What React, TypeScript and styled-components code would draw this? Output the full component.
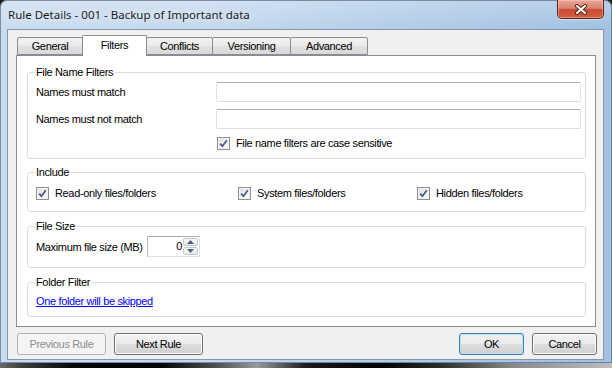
import styled, { createGlobalStyle } from 'styled-components'

const Global = createGlobalStyle`
  html, body {
    margin: 0;
    padding: 0;
  }
  body {
    width: 612px;
    height: 368px;
    overflow: hidden;
    background: #1a1a1a;
    font-family: 'Liberation Sans', Arial, sans-serif;
    font-size: 11px;
    letter-spacing: -0.35px;
    color: #000;
  }
`

const Screen = styled.div`
  width: 612px;
  height: 368px;
  display: flex;
  flex-direction: column;
`

const Frame = styled.div`
  height: 363px;
  box-sizing: border-box;
  display: flex;
  flex-direction: column;
  padding-bottom: 3px;
  border-radius: 7px 7px 0 0;
  background:
    linear-gradient(180deg, rgba(255, 255, 255, 0.25) 0%, rgba(255, 255, 255, 0) 30px),
    linear-gradient(90deg, #c9dcf0 0%, #c4d8ee 35%, #b2cce8 65%, #a1c0e2 100%);
  box-shadow: inset 0 0 0 1px rgba(52, 74, 104, 0.55);
`

const TitleBar = styled.div`
  height: 29px;
  display: flex;
  justify-content: space-between;
  align-items: flex-start;
  padding-left: 8px;
`

const Title = styled.div`
  margin-top: 7px;
  font-family: 'Noto Sans', 'Open Sans', sans-serif;
  font-size: 11.5px;
  letter-spacing: 0;
  line-height: 16px;
  color: #1b1b1b;
  text-shadow: 0 0 6px rgba(255, 255, 255, 0.9);
`

const CloseButton = styled.div`
  width: 47px;
  height: 19px;
  margin-right: 8px;
  box-sizing: border-box;
  display: flex;
  align-items: center;
  justify-content: center;
  border: 1px solid #5b2016;
  border-top: none;
  border-radius: 0 0 5px 5px;
  background: linear-gradient(180deg, #e8a898 0%, #d98470 45%, #c84a32 55%, #d1603f 100%);
  box-shadow: inset 0 0 0 1px rgba(255, 210, 200, 0.45), 0 1px 1px rgba(255, 255, 255, 0.5);
`

const Client = styled.div`
  flex: 1;
  margin: 0 8px 0 7px;
  display: flex;
  flex-direction: column;
  border: 1px solid #8597ab;
  background: #f0f0f0;
`

const TabStrip = styled.div`
  display: flex;
  align-items: flex-end;
  height: 20px;
  padding: 5px 0 0 10px;
  position: relative;
  z-index: 1;
`

const Tab = styled.div<{ $w: number; $active?: boolean }>`
  width: ${(p) => p.$w}px;
  height: ${(p) => (p.$active ? 21 : 18)}px;
  margin-bottom: ${(p) => (p.$active ? -1 : 0)}px;
  margin-left: -1px;
  box-sizing: border-box;
  display: flex;
  align-items: center;
  justify-content: center;
  padding-bottom: ${(p) => (p.$active ? 2 : 0)}px;
  border: 1px solid #898c95;
  border-bottom: ${(p) => (p.$active ? 'none' : '1px solid #898c95')};
  border-radius: 2px 2px 0 0;
  background: ${(p) =>
    p.$active ? '#ffffff' : 'linear-gradient(180deg, #f3f3f3 0%, #ececec 45%, #e1e1e1 55%, #d9d9d9 100%)'};
  position: relative;
  z-index: ${(p) => (p.$active ? 2 : 0)};
`

const Panel = styled.div`
  height: 272px;
  margin: 0 7px 0 8px;
  box-sizing: border-box;
  display: flex;
  flex-direction: column;
  padding: 9px 9px 0 10px;
  border: 1px solid #898c95;
  background: #fff;
`

const Group = styled.fieldset<{ $mt?: number; $pt: number; $pb: number }>`
  margin: ${(p) => p.$mt ?? 0}px 0 0 0;
  min-width: 0;
  padding: ${(p) => p.$pt}px 4px ${(p) => p.$pb}px 8px;
  border: 1px solid #d5dfe5;
  border-radius: 3px;
`

const Legend = styled.legend`
  margin-left: -1px;
  padding: 0 1px;
  line-height: 14px;
  height: 14px;
  color: #000;
`

const NameGrid = styled.div`
  display: grid;
  grid-template-columns: 180px 1fr;
  grid-template-rows: 20px 20px 14px;
  row-gap: 7px;
  align-items: center;
`

const Label = styled.span<{ $w?: number }>`
  ${(p) => (p.$w ? `width: ${p.$w}px;` : '')}
  white-space: nowrap;
`

const TextBox = styled.div`
  height: 20px;
  box-sizing: border-box;
  border: 1px solid #dbdfe6;
  border-top-color: #abadb3;
  border-left-color: #e2e3ea;
  border-right-color: #e2e3ea;
  border-radius: 2px;
  background: #fff;
`

const CheckRow = styled.div<{ $col?: number }>`
  display: flex;
  align-items: center;
  gap: 6px;
  height: 14px;
  ${(p) => (p.$col ? `grid-column: ${p.$col}; padding-left: 1px;` : '')}
`

const Box = styled.div`
  width: 13px;
  height: 13px;
  flex: none;
  box-sizing: border-box;
  border: 1px solid #8e8f8f;
  background: linear-gradient(135deg, #dcdcdc 0%, #f0f0f0 50%, #fbfbfb 100%);
  box-shadow: inset 0 0 0 1px #f4f4f4;
  display: flex;
  align-items: center;
  justify-content: center;
`

const IncludeGrid = styled.div`
  display: grid;
  grid-template-columns: 202px 179px 1fr;
  height: 14px;
`

const SizeRow = styled.div`
  display: flex;
  align-items: center;
  height: 21px;
`

const Spinner = styled.div`
  width: 53px;
  height: 21px;
  box-sizing: border-box;
  display: flex;
  border: 1px solid #dbdfe6;
  border-top-color: #abadb3;
  border-left-color: #b9bdc5;
  background: #fff;
`

const SpinValue = styled.div`
  flex: 1;
  text-align: right;
  line-height: 19px;
  padding-right: 1px;
`

const SpinArrows = styled.div`
  width: 15px;
  display: flex;
  flex-direction: column;
  padding: 1px 1px 1px 0;
  gap: 1px;
`

const SpinButton = styled.div`
  flex: 1;
  display: flex;
  align-items: center;
  justify-content: center;
  border: 1px solid #c3c8cf;
  border-radius: 2px;
  background: linear-gradient(180deg, #f7f7f7 0%, #e9e9e9 100%);
`

const Link = styled.a`
  display: block;
  height: 14px;
  line-height: 14px;
  color: #0000ff;
  text-decoration: underline;
`

const ButtonRow = styled.div`
  display: flex;
  align-items: center;
  gap: 8px;
  margin-top: 6px;
  padding: 0 6px 0 9px;
`

const Spacer = styled.div`
  flex: 1;
`

const Button = styled.div<{ $w: number; $disabled?: boolean; $default?: boolean }>`
  width: ${(p) => p.$w}px;
  height: 22px;
  box-sizing: border-box;
  display: flex;
  align-items: center;
  justify-content: center;
  border-radius: 3px;
  border: 1px solid ${(p) => (p.$disabled ? '#adb2b5' : p.$default ? '#3c7fb1' : '#707070')};
  background: ${(p) =>
    p.$disabled ? '#f4f4f4' : 'linear-gradient(180deg, #f2f2f2 0%, #ebebeb 48%, #dddddd 52%, #cfcfcf 100%)'};
  box-shadow: inset 0 0 0 1px ${(p) => (p.$disabled ? '#f4f4f4' : p.$default ? '#b7e2f7' : '#fcfcfc')};
  color: ${(p) => (p.$disabled ? '#8d8d8d' : '#000')};
`

const Desktop = styled.div`
  flex: 1;
  background: linear-gradient(
    90deg,
    #6a6a6a 0%,
    #3a3a3a 4%,
    #050505 12%,
    #000 26%,
    #555 36%,
    #9a9a9a 42%,
    #1c1c1c 50%,
    #000 62%,
    #2c2c2c 72%,
    #8a8a8a 84%,
    #bdbdbd 100%
  );
`

function Check() {
  return (
    <Box>
      <svg width="9" height="9" viewBox="0 0 9 9">
        <path d="M1.2 4.6 L3.4 7.2 L7.8 1.2" fill="none" stroke="#4b5e93" strokeWidth="1.8" strokeLinejoin="round" />
      </svg>
    </Box>
  )
}

const tabs = [
  { label: 'General', w: 66 },
  { label: 'Filters', w: 65, active: true },
  { label: 'Conflicts', w: 67 },
  { label: 'Versioning', w: 79 },
  { label: 'Advanced', w: 78 },
]

export default function App() {
  return (
    <Screen>
      <Global />
      <Frame>
        <TitleBar>
          <Title>Rule Details - 001 - Backup of Important data</Title>
          <CloseButton>
            <svg width="14" height="11" viewBox="0 0 14 11">
              <path d="M3 2 L11 9 M11 2 L3 9" stroke="#4a1e16" strokeWidth="4" strokeLinecap="round" />
              <path d="M3 2 L11 9 M11 2 L3 9" stroke="#ffffff" strokeWidth="2.2" strokeLinecap="round" />
            </svg>
          </CloseButton>
        </TitleBar>
        <Client>
          <TabStrip>
            {tabs.map((t) => (
              <Tab key={t.label} $w={t.w} $active={t.active}>
                {t.label}
              </Tab>
            ))}
          </TabStrip>
          <Panel>
            <Group $pt={3} $pb={8}>
              <Legend>File Name Filters</Legend>
              <NameGrid>
                <Label>Names must match</Label>
                <TextBox />
                <Label>Names must not match</Label>
                <TextBox />
                <CheckRow $col={2}>
                  <Check />
                  <span>File name filters are case sensitive</span>
                </CheckRow>
              </NameGrid>
            </Group>
            <Group $mt={6} $pt={7} $pb={11}>
              <Legend>Include</Legend>
              <IncludeGrid>
                <CheckRow>
                  <Check />
                  <span>Read-only files/folders</span>
                </CheckRow>
                <CheckRow>
                  <Check />
                  <span>System files/folders</span>
                </CheckRow>
                <CheckRow>
                  <Check />
                  <span>Hidden files/folders</span>
                </CheckRow>
              </IncludeGrid>
            </Group>
            <Group $mt={7} $pt={3} $pb={10}>
              <Legend>File Size</Legend>
              <SizeRow>
                <Label $w={111}>Maximum file size (MB)</Label>
                <Spinner>
                  <SpinValue>0</SpinValue>
                  <SpinArrows>
                    <SpinButton>
                      <svg width="7" height="4" viewBox="0 0 7 4">
                        <path d="M0 4 L3.5 0 L7 4 Z" fill="#4d6185" />
                      </svg>
                    </SpinButton>
                    <SpinButton>
                      <svg width="7" height="4" viewBox="0 0 7 4">
                        <path d="M0 0 L3.5 4 L7 0 Z" fill="#4d6185" />
                      </svg>
                    </SpinButton>
                  </SpinArrows>
                </Spinner>
              </SizeRow>
            </Group>
            <Group $mt={7} $pt={5} $pb={8}>
              <Legend>Folder Filter</Legend>
              <Link href="#">One folder will be skipped</Link>
            </Group>
          </Panel>
          <ButtonRow>
            <Button $w={89} $disabled>
              Previous Rule
            </Button>
            <Button $w={89}>Next Rule</Button>
            <Spacer />
            <Button $w={65} $default>
              OK
            </Button>
            <Button $w={65}>Cancel</Button>
          </ButtonRow>
        </Client>
      </Frame>
      <Desktop />
    </Screen>
  )
}
